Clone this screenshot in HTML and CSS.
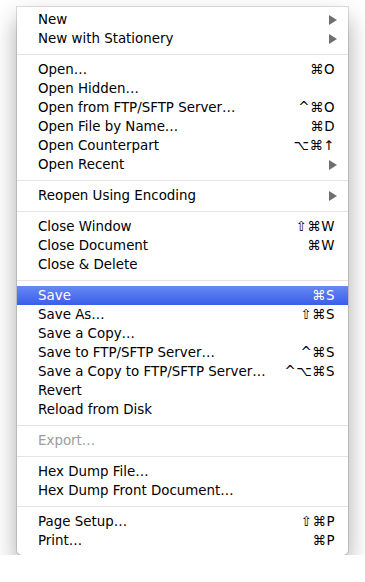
FILE: index.html
```html
<!DOCTYPE html>
<html>
<head>
<meta charset="utf-8">
<link rel="stylesheet" href="styles.css">
</head>
<body>
<div class="stage">
  <div class="menu">
    <div class="item"><span class="label">New</span><span class="sub"><svg width="8" height="10" viewBox="0 0 8 10"><path d="M0 0 L8 5 L0 10 Z" fill="#6f6f6f"/></svg></span></div>
    <div class="item"><span class="label">New with Stationery</span><span class="sub"><svg width="8" height="10" viewBox="0 0 8 10"><path d="M0 0 L8 5 L0 10 Z" fill="#6f6f6f"/></svg></span></div>
    <div class="sep"></div>
    <div class="item"><span class="label">Open…</span><span class="key">⌘O</span></div>
    <div class="item"><span class="label">Open Hidden…</span></div>
    <div class="item"><span class="label">Open from FTP/SFTP Server…</span><span class="key">^⌘O</span></div>
    <div class="item"><span class="label">Open File by Name…</span><span class="key">⌘D</span></div>
    <div class="item"><span class="label">Open Counterpart</span><span class="key">⌥⌘↑</span></div>
    <div class="item"><span class="label">Open Recent</span><span class="sub"><svg width="8" height="10" viewBox="0 0 8 10"><path d="M0 0 L8 5 L0 10 Z" fill="#6f6f6f"/></svg></span></div>
    <div class="sep"></div>
    <div class="item"><span class="label">Reopen Using Encoding</span><span class="sub"><svg width="8" height="10" viewBox="0 0 8 10"><path d="M0 0 L8 5 L0 10 Z" fill="#6f6f6f"/></svg></span></div>
    <div class="sep"></div>
    <div class="item"><span class="label">Close Window</span><span class="key">⇧⌘W</span></div>
    <div class="item"><span class="label">Close Document</span><span class="key">⌘W</span></div>
    <div class="item"><span class="label">Close &amp; Delete</span></div>
    <div class="sep"></div>
    <div class="item active"><span class="label">Save</span><span class="key">⌘S</span></div>
    <div class="item"><span class="label">Save As…</span><span class="key">⇧⌘S</span></div>
    <div class="item"><span class="label">Save a Copy…</span></div>
    <div class="item"><span class="label">Save to FTP/SFTP Server…</span><span class="key">^⌘S</span></div>
    <div class="item"><span class="label">Save a Copy to FTP/SFTP Server…</span><span class="key">^⌥⌘S</span></div>
    <div class="item"><span class="label">Revert</span></div>
    <div class="item"><span class="label">Reload from Disk</span></div>
    <div class="sep"></div>
    <div class="item disabled"><span class="label">Export…</span></div>
    <div class="sep"></div>
    <div class="item"><span class="label">Hex Dump File…</span></div>
    <div class="item"><span class="label">Hex Dump Front Document…</span></div>
    <div class="sep"></div>
    <div class="item"><span class="label">Page Setup…</span><span class="key">⇧⌘P</span></div>
    <div class="item"><span class="label">Print…</span><span class="key">⌘P</span></div>
  </div>
</div>
</body>
</html>
```

FILE: styles.css
```css
html, body {
  margin: 0;
  padding: 0;
  background: #ffffff;
}
.stage {
  padding: 7px 0 0 17px;
}
.menu {
  width: 331px;
  box-sizing: border-box;
  padding: 3px 0 5px;
  background: #ffffff;
  border-radius: 0 0 5px 5px;
  box-shadow: 0 0 0 1px rgba(0,0,0,0.12), 0 12px 24px rgba(0,0,0,0.35);
  font-family: "DejaVu Sans", "Liberation Sans", sans-serif;
  font-size: 13.4px;
  color: #000;
}
.item {
  height: 19px;
  display: flex;
  align-items: center;
  justify-content: space-between;
  padding: 0 13px 0 21px;
  white-space: nowrap;
}
.item.active {
  background: linear-gradient(#6689f3, #3a5ee9);
  color: #fff;
}
.item.disabled {
  color: #9c9c9c;
}
.key {
  letter-spacing: 0.5px;
}
.sub {
  display: flex;
  margin-right: -2px;
}
.sep {
  height: 12px;
  display: flex;
  align-items: center;
}
.sep::before {
  content: "";
  display: block;
  width: 100%;
  height: 1px;
  background: #e4e4e4;
}
```
